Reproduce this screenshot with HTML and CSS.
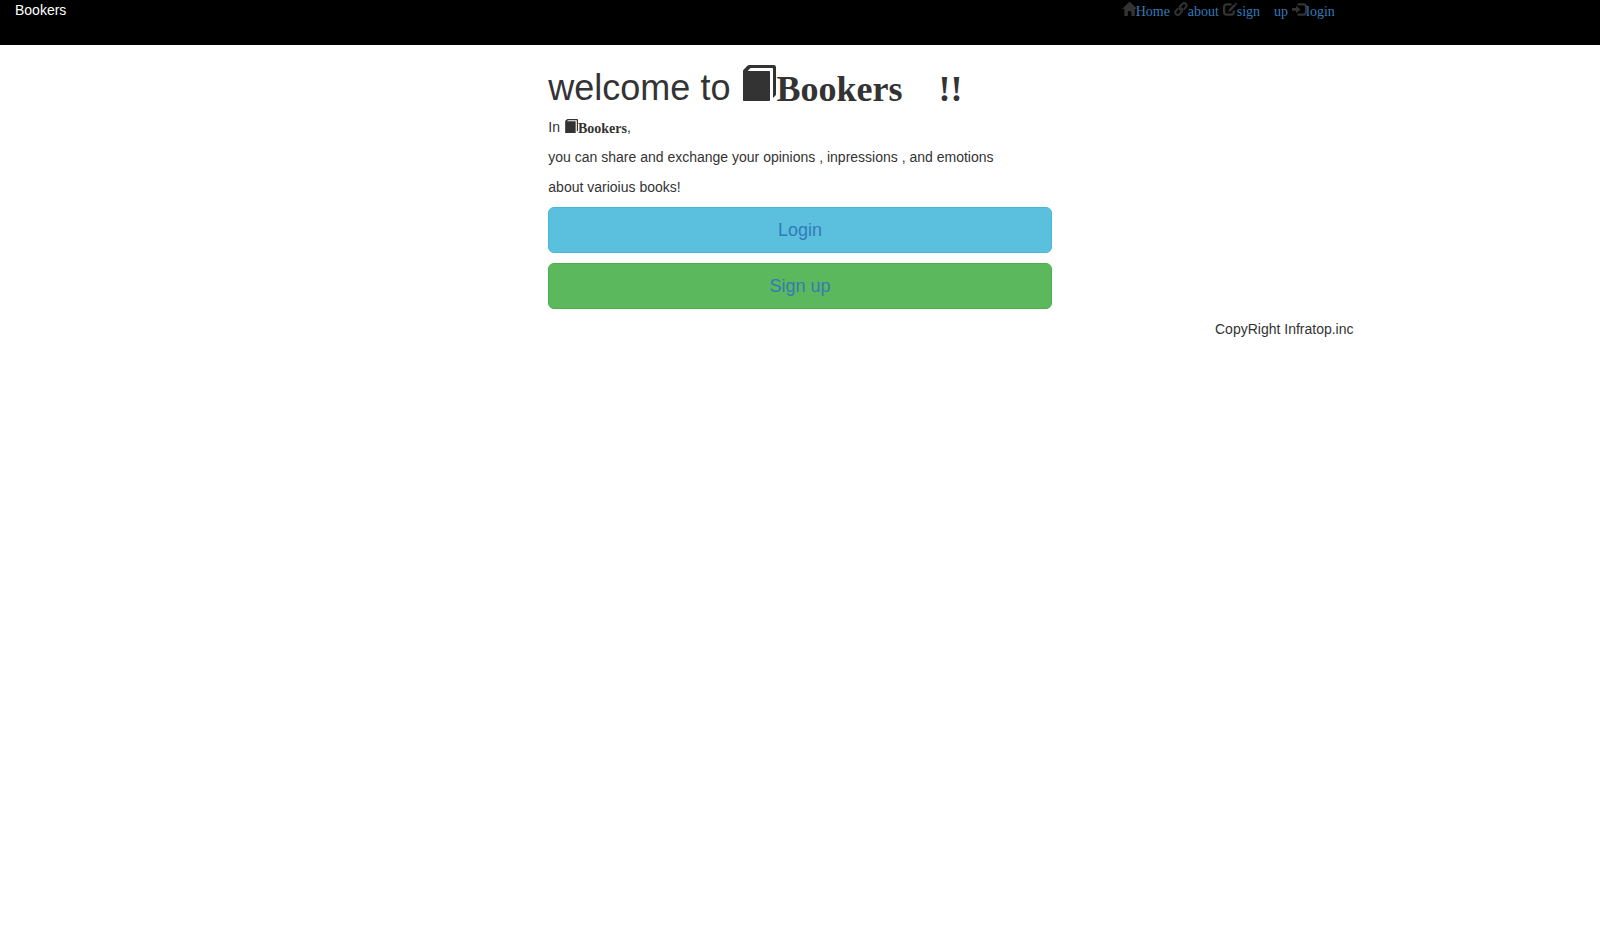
FILE: index.html
```
<!DOCTYPE html>
<html lang="en">
<head>
<meta charset="utf-8">
<title>Bookers</title>
<link rel="stylesheet" href="styles.css">
</head>
<body>
<svg class="sprite" aria-hidden="true">
  <symbol id="book" viewBox="0 0 1200 1200"><path transform="matrix(1 0 0 -1 0 1200)" d="M300 1200h825q75 0 75 -75v-900q0 -25 -18 -43l-64 -64q-8 -8 -13 -5.500t-5 12.500v950q0 10 -7.500 17.500t-17.500 7.500h-700q-25 0 -43 -18l-64 -64q-8 -8 -5.500 -13t12.500 -5h700q10 0 17.500 -7.500t7.500 -17.500v-950q0 -10 -7.500 -17.500t-17.500 -7.500h-850q-10 0 -17.500 7.500t-7.500 17.500v975q0 25 18 43l139 139q18 18 43 18z"/></symbol>
  <symbol id="home" viewBox="0 0 1200 1200" overflow="visible"><path transform="matrix(1 0 0 -1 0 1200)" d="M18 618l620 608q8 7 18.500 7t17.500 -7l608 -608q8 -8 5.500 -13t-12.500 -5h-175v-575q0 -10 -7.500 -17.500t-17.500 -7.500h-250q-10 0 -17.500 7.500t-7.500 17.500v375h-300v-375q0 -10 -7.500 -17.500t-17.500 -7.500h-250q-10 0 -17.500 7.500t-7.500 17.500v575h-175q-10 0 -12.500 5t5.500 13z"/></symbol>
  <symbol id="link" viewBox="0 0 1200 1200" overflow="visible"><g fill="none" stroke="currentColor" stroke-width="165" transform="translate(590 600) rotate(-48)"><path d="M120 210H410A205 205 0 0 0 410 -200H110A205 205 0 0 0 -80 70"/><path d="M-120 -210H-410A205 205 0 0 0 -410 200H-110A205 205 0 0 0 80 -70"/></g></symbol>
  <symbol id="edit" viewBox="0 0 1200 1200" overflow="visible"><path fill="none" stroke="currentColor" stroke-width="190" d="M730 195H320Q95 195 95 420V860Q95 1085 320 1085H700Q925 1085 925 860V720"/><path d="M1080 50L1230 200L1150 280L1000 130zM950 180L1100 330L690 750L430 860L540 600z"/></symbol>
  <symbol id="login" viewBox="0 0 1200 1200" overflow="visible"><path fill="none" stroke="currentColor" stroke-width="190" d="M480 195H980Q1200 195 1200 415V865Q1200 1085 980 1085H480"/><path d="M350 310L730 640L350 970V760H0V520H350z"/></symbol>
</svg>
<header class="header">
  <div class="brand">Bookers</div>
  <nav class="nav">
    <span class="glyph"><svg class="icon"><use href="#home"/></svg><a href="#">Home</a></span>
    <span class="glyph"><svg class="icon"><use href="#link"/></svg><a href="#">about</a></span>
    <span class="glyph"><svg class="icon"><use href="#edit"/></svg><a href="#">sign&emsp;up</a></span>
    <span class="glyph"><svg class="icon"><use href="#login"/></svg><a href="#">login</a></span>
  </nav>
</header>
<main class="main">
  <h1>welcome to <span class="glyph strong"><svg class="icon"><use href="#book"/></svg>Bookers&emsp;!!</span></h1>
  <p>In <span class="glyph strong"><svg class="icon"><use href="#book"/></svg>Bookers</span>,</p>
  <p>you can share and exchange your opinions , inpressions , and emotions</p>
  <p>about varioius books!</p>
  <button class="btn info" type="button">Login</button>
  <button class="btn success" type="button">Sign up</button>
</main>
<footer class="footer">CopyRight Infratop.inc</footer>
</body>
</html>
```
FILE: styles.css
```
* { box-sizing: border-box; }
body {
  margin: 0;
  background: #fff;
  color: #333;
  font: 14px/20px "Liberation Sans", Arial, sans-serif;
}
.sprite { position: absolute; width: 0; height: 0; }
.header {
  display: grid;
  grid-template-columns: 2fr 1fr;
  min-height: 45px;
  background: #000;
}
.brand { padding: 0 15px; color: #fff; }
.nav { padding: 0 15px 0 55px; }
a { color: #337ab7; text-decoration: none; }
.glyph {
  position: relative;
  top: 1px;
  display: inline-block;
  font-family: "Liberation Serif", "Times New Roman", serif;
  line-height: 1;
}
.strong { font-weight: 700; }
.icon {
  width: 1em;
  height: 1em;
  margin-top: -1px;
  fill: currentColor;
  overflow: visible;
  vertical-align: 0;
}
.main {
  width: calc(100% / 3);
  margin: 0 auto;
  padding: 0 15px;
}
h1 { margin: 20px 0 9px; font-size: 36px; font-weight: 500; line-height: 40px; }
p { margin: 0 0 10px; }
.btn {
  display: block;
  width: 100%;
  margin-bottom: 10px;
  padding: 10px 16px;
  border: 1px solid;
  border-radius: 6px;
  color: #337ab7;
  font-family: inherit;
  font-size: 18px;
  line-height: 24px;
}
.info { background: #5bc0de; border-color: #46b8da; }
.success { background: #5cb85c; border-color: #4cae4c; }
.footer { margin-left: 75%; padding: 0 15px; }
```
